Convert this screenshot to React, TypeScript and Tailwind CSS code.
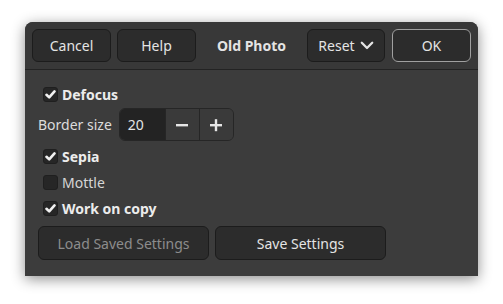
import React from "react";

type CheckProps = {
  label: string;
  checked: boolean;
};

function CheckRow({ label, checked }: CheckProps) {
  return (
    <div className="flex h-[26px] items-center pl-[5px]">
      <span className="flex h-[15px] w-[15px] items-center justify-center rounded-[3px] border border-[#1f1f1f] bg-[#262626]">
        {checked && (
          <svg width="11" height="11" viewBox="0 0 11 11" fill="none">
            <path d="M1.5 5.8 L4.2 8.4 L9.5 2.4" stroke="#f0f0f0" strokeWidth="2.6" strokeLinecap="round" strokeLinejoin="round" />
          </svg>
        )}
      </span>
      <span className={`ml-[4px] ${checked ? "font-bold text-[#ececec]" : "text-[#d6d6d6]"}`}>{label}</span>
    </div>
  );
}

const btn =
  "flex h-[33px] items-center justify-center rounded-[6px] border border-[#1c1c1c] bg-[#2c2c2c] text-[#e4e4e4]";

export default function App() {
  return (
    <div
      className="h-[304px] w-[503px] bg-white pl-[25px] pt-[22px] text-[14px]"
      style={{ fontFamily: '"Noto Sans", "DejaVu Sans", sans-serif' }}
    >
      <div className="flex h-[254px] w-[453px] flex-col rounded-t-[8px] bg-[#3c3c3c] shadow-[0_3px_14px_rgba(0,0,0,0.45)]">
        <div className="flex h-[48px] items-center rounded-t-[8px] border-b border-[#232323] bg-[#383838] px-[7px]">
          <button className={`${btn} w-[79px]`}>Cancel</button>
          <button className={`${btn} ml-[6px] w-[79px]`}>Help</button>
          <div className="flex-1 text-center font-bold text-[#e4e4e4]">Old Photo</div>
          <button className={`${btn} w-[78px] gap-[5px]`}>
            <span>Reset</span>
            <svg width="14" height="9" viewBox="0 0 14 9" fill="none">
              <path d="M1.8 1.8 L7 7 L12.2 1.8" stroke="#e4e4e4" strokeWidth="2.3" strokeLinecap="round" strokeLinejoin="round" />
            </svg>
          </button>
          <button className="ml-[7px] flex h-[33px] w-[79px] items-center justify-center rounded-[6px] border border-[#a0a0a0] bg-[#2c2c2c] text-[#e4e4e4]">
            OK
          </button>
        </div>

        <div className="flex flex-col px-[13px] pt-[11px] text-[#e4e4e4]">
          <CheckRow label="Defocus" checked />
          <div className="mt-[1px] flex h-[33px] items-center">
            <span className="text-[#dcdcdc]">Border size</span>
            <div className="ml-[7px] flex h-[33px] overflow-hidden rounded-[6px] border border-[#262626]">
              <div className="flex w-[45px] items-center bg-[#232323] pl-[8px] text-[#e4e4e4]">20</div>
              <div className="flex w-[34px] items-center justify-center border-l border-[#262626] bg-[#3a3a3a]">
                <svg width="14" height="14" viewBox="0 0 14 14">
                  <rect x="1" y="6" width="12" height="2.4" fill="#e6e6e6" />
                </svg>
              </div>
              <div className="flex w-[34px] items-center justify-center border-l border-[#262626] bg-[#3a3a3a]">
                <svg width="14" height="14" viewBox="0 0 14 14">
                  <rect x="1" y="6" width="12" height="2.4" fill="#e6e6e6" />
                  <rect x="5.8" y="1.2" width="2.4" height="12" fill="#e6e6e6" />
                </svg>
              </div>
            </div>
          </div>
          <div className="mt-[2px] flex flex-col">
            <CheckRow label="Sepia" checked />
            <CheckRow label="Mottle" checked={false} />
            <CheckRow label="Work on copy" checked />
          </div>
          <div className="mt-[5px] flex gap-[6px]">
            <button className="flex h-[34px] w-[171px] items-center justify-center rounded-[6px] border border-[#1c1c1c] bg-[#2c2c2c] text-[#8c8c8c]">
              Load Saved Settings
            </button>
            <button className="flex h-[34px] w-[171px] items-center justify-center rounded-[6px] border border-[#1c1c1c] bg-[#2c2c2c] text-[#e4e4e4]">
              Save Settings
            </button>
          </div>
        </div>
      </div>
    </div>
  );
}
